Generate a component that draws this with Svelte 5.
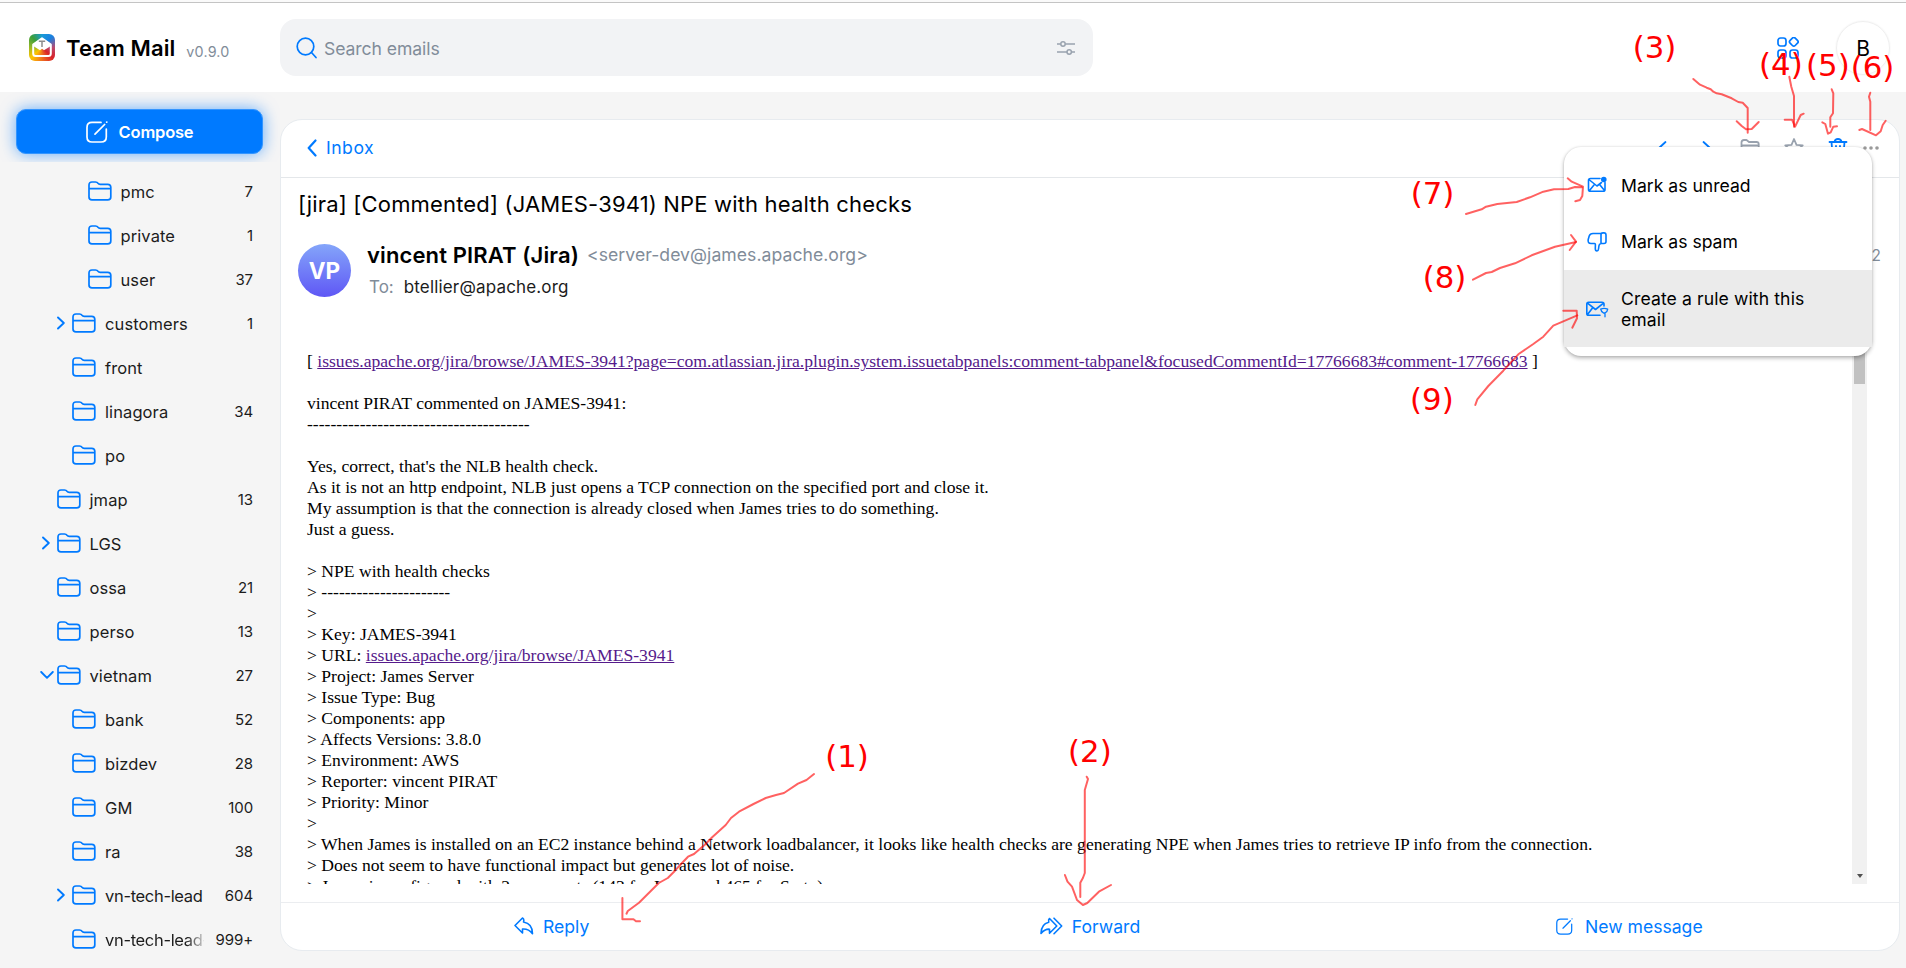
<script>
  const folders = [
    { name: 'pmc', count: '7', level: 2 },
    { name: 'private', count: '1', level: 2 },
    { name: 'user', count: '37', level: 2 },
    { name: 'customers', count: '1', level: 1, arrow: 'right' },
    { name: 'front', count: '', level: 1 },
    { name: 'linagora', count: '34', level: 1 },
    { name: 'po', count: '', level: 1 },
    { name: 'jmap', count: '13', level: 0 },
    { name: 'LGS', count: '', level: 0, arrow: 'right' },
    { name: 'ossa', count: '21', level: 0 },
    { name: 'perso', count: '13', level: 0 },
    { name: 'vietnam', count: '27', level: 0, arrow: 'down' },
    { name: 'bank', count: '52', level: 1 },
    { name: 'bizdev', count: '28', level: 1 },
    { name: 'GM', count: '100', level: 1 },
    { name: 'ra', count: '38', level: 1 },
    { name: 'vn-tech-lead', count: '604', level: 1, arrow: 'right', long: true },
    { name: 'vn-tech-lead-', count: '999+', level: 1, long: true, fade: true }
  ];

  const labels = [
    { n: 1, x: 825.2, y: 767 },
    { n: 2, x: 1068.1, y: 762 },
    { n: 3, x: 1632.7, y: 57.6 },
    { n: 4, x: 1759.1, y: 75 },
    { n: 5, x: 1806.1, y: 76 },
    { n: 6, x: 1850.7, y: 78 },
    { n: 7, x: 1410.7, y: 204 },
    { n: 8, x: 1422.7, y: 287.7 },
    { n: 9, x: 1410.1, y: 410.3 }
  ];

  const strokes = [
    '814,774 806.5,780 798,783.7 784,793 776,795 765.7,798 753.5,804 739,811.7 731,818 725.7,825 712.7,836.7 704.5,845 694,854 688,856.7 682,863 675,870.7 667.8,878 658.8,883 639,902.7 627.8,911 626.5,913.7',
    '622.4,898 622.4,919.3 633.5,919.3 636,921.3 640,921.3',
    '1086.7,776.7 1088,779 1084.8,790 1084.8,873 1082.9,878 1080.3,882.7 1080.3,897',
    '1064.9,875 1067.5,881.7 1072,886.7 1077,900 1082.9,905 1087.3,903 1098.9,891.7 1111,885',
    '1693.3,79 1700,84.7 1706.7,87.7 1710.7,89.3 1713.3,91.7 1716.7,93.3 1721.7,94.3 1731.7,98.3 1738.3,102 1742.7,102.7 1747.7,108 1747.7,132.7',
    '1736.7,121.3 1741.7,126 1746,129.3 1751.7,129 1758.7,122',
    '1789.3,76.7 1791.3,86.7 1794,96 1794,126.7',
    '1784.7,119.7 1792,119.7 1795,126.7 1800.7,115 1803.7,113.7',
    '1831.7,89.3 1833.3,93.3 1833,113.3 1830.3,117.3 1830.3,126.7',
    '1822.3,122.3 1825.3,124 1828,133.7 1830.7,132.3 1833.3,126.7 1837,126.3',
    '1870.3,92.7 1869,96.7 1870.3,101.7 1870.3,130',
    '1859.3,130 1862,129 1876,135.3 1880.7,131.3 1882.7,125 1885.7,120.7',
    '1466,214 1481.7,209.3 1486,206.7 1497.3,204 1516.7,202 1530,197.3 1543.3,191.7 1554,189.3 1568.3,189 1575,187 1581.7,187.3',
    '1567.7,178.3 1571.7,181.7 1583,186.7 1582.3,196 1580,200 1575.3,201.3',
    '1473,279.7 1486,273 1491.7,272 1500,268 1515,263.3 1531.7,255.3 1555,246.7 1576,242',
    '1571,235 1576,241.7 1569.7,250',
    '1475.3,405 1477.3,399.3 1488.3,386 1503.3,370.7 1518.3,354.3 1533.3,344 1543.3,336.7 1553.3,325.7 1577.3,315.3',
    '1563.3,310.7 1576.7,310.7 1577,318.3 1572.3,327.7'
  ];

  const link1 = 'issues.apache.org/jira/browse/JAMES-3941?page=com.atlassian.jira.plugin.system.issuetabpanels:comment-tabpanel&focusedCommentId=17766683#comment-17766683';
  const link2 = 'issues.apache.org/jira/browse/JAMES-3941';

  const intro = `vincent PIRAT commented on JAMES-3941:
--------------------------------------

Yes, correct, that's the NLB health check.
As it is not an http endpoint, NLB just opens a TCP connection on the specified port and close it.
My assumption is that the connection is already closed when James tries to do something.
Just a guess.

> NPE with health checks
> ----------------------
>
> Key: JAMES-3941
> URL: `;
  const rest = `
> Project: James Server
> Issue Type: Bug
> Components: app
> Affects Versions: 3.8.0
> Environment: AWS
> Reporter: vincent PIRAT
> Priority: Minor
>
> When James is installed on an EC2 instance behind a Network loadbalancer, it looks like health checks are generating NPE when James tries to retrieve IP info from the connection.
> Does not seem to have functional impact but generates lot of noise.
> James is configured with 2 open ports (143 for Imap and 465 for Smtp)`;
</script>

{#snippet composeIcon(size, w)}
  <svg width={size} height={size} viewBox="0 0 22 22" fill="none" stroke="currentColor" stroke-width={w} stroke-linecap="round" stroke-linejoin="round">
    <path d="M15 1.400H6Q1 1.400 1 6.400V16Q1 21 6 21H15Q20.300 21 20.300 16V8" />
    <path d="M9 13.200L18.600 3.500M20.700 1.200L20.800 1.100" />
  </svg>
{/snippet}

<div class="page">
  <div class="topline"></div>
  <header>
    <div class="brand">
      <div class="logo">
        <svg width="26" height="26" viewBox="0 0 26 26">
          <path d="M4.200 10L13 4L21.800 10V12L15 16.200L13 14.800L11 16.200L4.200 12Z" fill="#fff" />
          <path d="M4.200 10.500V19.500Q4.200 22 6.700 22H19.300Q21.800 22 21.800 19.500V10.500L13 4.200Z" fill="none" stroke="#fff" stroke-width="2" stroke-linejoin="round" />
          <path d="M9.800 7.300H16.200M13 7.300V13" stroke="#8d8d8d" stroke-width="1.500" />
        </svg>
      </div>
      <span class="title">Team Mail</span>
      <span class="version">v0.9.0</span>
    </div>
    <div class="search">
      <svg width="22" height="22" viewBox="0 0 22 22" fill="none" stroke="#007aff" stroke-width="1.700" stroke-linecap="round"><circle cx="9.500" cy="9.500" r="8.300" /><path d="M15.500 15.500L20 20.500" /></svg>
      <span>Search emails</span>
      <svg class="tune" width="18" height="14" viewBox="0 0 18 14" fill="none" stroke="#99a2ae" stroke-width="1.500"><path d="M0 3H3.700M8.300 3H18M0 11H10M14.500 11H18" /><circle cx="6" cy="3" r="2.200" /><circle cx="12.200" cy="11" r="2.200" /></svg>
    </div>
    <div class="account">
      <svg width="22" height="22" viewBox="0 0 22 22" fill="none" stroke="#007aff" stroke-width="1.700">
        <rect x="1" y="1" width="8" height="8" rx="2.500" /><rect x="1" y="13" width="8" height="8" rx="2.500" /><rect x="13" y="13" width="8" height="8" rx="2.500" />
        <rect x="13.200" y="1.200" width="7.200" height="7.200" rx="2" transform="rotate(45 16.800 4.800)" />
      </svg>
      <div class="me">B</div>
    </div>
  </header>

  <div class="content">
    <aside>
      <div class="compose-zone">
        <button class="compose">{@render composeIcon(22, 1.7)}<span>Compose</span></button>
      </div>
      <nav>
        {#each folders as f}
          <div class="folder level{f.level}">
            <span class="caret">
              {#if f.arrow === 'right'}
                <svg width="8" height="14" viewBox="0 0 8 14"><path d="M1 1.500L6.800 7L1 12.500" /></svg>
              {:else if f.arrow === 'down'}
                <svg class="down" width="14" height="8" viewBox="0 0 14 8"><path d="M1.200 1L7 6.800L12.800 1" /></svg>
              {/if}
            </span>
            <svg class="ficon" width="24" height="20" viewBox="0 0 24 20"><path d="M1 7.700V4Q1 1 4 1H7.500Q9.200 1 10 2.300Q10.700 3.300 12.200 3.300H19.700Q22.800 3.300 22.800 6.300V7.700M1 7.700V16Q1 18.900 4 18.900H19.700Q22.800 18.900 22.800 16V7.700Z" /></svg>
            <span class="fname" class:long={f.long} class:fade={f.fade}>{f.name}</span>
            <span class="count">{f.count}</span>
          </div>
        {/each}
      </nav>
    </aside>

    <main>
      <div class="toolbar">
        <svg width="10" height="18" viewBox="0 0 10 18" fill="none" stroke="#007aff" stroke-width="2.200" stroke-linecap="round" stroke-linejoin="round"><path d="M8.500 1.500L1.700 9L8.500 16.500" /></svg>
        <span class="back">Inbox</span>
        <div class="tools">
          <svg width="20" height="20" viewBox="0 0 20 20" stroke="#007aff"><path d="M12.500 4L6 10L12.500 16" /></svg>
          <svg width="20" height="20" viewBox="0 0 20 20" stroke="#007aff"><path d="M7.500 4L14 10L7.500 16" /></svg>
          <svg width="20" height="20" viewBox="0 0 20 20" stroke="#99a2ae"><path d="M1.500 7.500V4.500Q1.500 2 4 2H6.500L9 4H16.500Q18.700 4 18.700 6V15.500Q18.700 17.500 16.500 17.500H4Q1.500 17.500 1.500 15.500V7.500H18.700" /></svg>
          <svg width="20" height="20" viewBox="0 0 20 20" stroke="#99a2ae"><path d="M10 1L12.500 6.800L18.700 7.400L14 11.500L15.500 17.700L10 14.400L4.500 17.700L6 11.500L1.300 7.400L7.500 6.800Z" /></svg>
          <svg class="trash" width="20" height="20" viewBox="0 0 20 20" stroke="#007aff"><path d="M1.500 4H18.500M6.500 4Q7 1 10 1Q13 1 13.500 4M3.500 4L4.500 16.500Q4.600 18.500 6.500 18.500H13.500Q15.400 18.500 15.500 16.500L16.500 4M8 8V14M12 8V14" /></svg>
          <svg class="dots" width="16" height="4" viewBox="0 0 16 4" fill="#9a9a9a"><circle cx="2" cy="2" r="1.800" /><circle cx="8" cy="2" r="1.800" /><circle cx="14" cy="2" r="1.800" /></svg>
        </div>
      </div>

      <h1>[jira] [Commented] (JAMES-3941) NPE with health checks</h1>
      <div class="sender">
        <div class="avatar">VP</div>
        <div class="who">
          <div class="from"><b>vincent PIRAT (Jira)</b><span class="address">&lt;server-dev@james.apache.org&gt;</span></div>
          <div class="to"><span class="tolabel">To:</span><span class="recipient">btellier@apache.org</span></div>
        </div>
        <span class="date">2</span>
      </div>

      <div class="reader">
        <pre>[ <a href="#a">{link1}</a> ]

{intro}<a href="#b">{link2}</a>{rest}</pre>
        <div class="scrollbar"><div class="thumb"></div><div class="arrowdown"></div></div>
      </div>

      <footer>
        <div class="action reply">
          <svg width="20" height="18" viewBox="0 0 20 18"><path d="M8.500 1L1 8.500L8.500 16V12Q14.500 11.500 18.500 16.700Q18.500 6.500 9.500 5Q10.500 2 8.500 1Z" /></svg>
          <span>Reply</span>
        </div>
        <div class="action">
          <svg width="23" height="18" viewBox="0 0 23 18"><path d="M9.500 1.500L16.800 9L9.500 16.300V12.200Q5 11.800 1 16.500Q1.200 7 8.700 5.300Q8.200 2.500 9.500 1.500Z" /><path d="M14 1.200L21.700 9L14 16.700" /></svg>
          <span>Forward</span>
        </div>
        <div class="action fresh">
          {@render composeIcon(17, 2)}
          <span>New message</span>
        </div>
      </footer>
    </main>
  </div>

  <div class="menu">
    <div class="item">
      <svg width="22" height="20" viewBox="0 0 22 20"><path d="M14 3.500H4.500Q2.500 3.500 2.500 5.500V14.500Q2.500 16.300 4.500 16.300H17Q19 16.300 19 14.500V7.500M3.500 5L11 11L15.500 7.500M3.500 15.500L8 10M18.500 15.500L14 10" /><circle cx="17.800" cy="4.500" r="2" fill="#007aff" /></svg>
      <span>Mark as unread</span>
    </div>
    <div class="item">
      <svg width="22" height="20" viewBox="0 0 22 20"><path d="M15 1.500H7Q4 1.500 3.200 4L2.200 7.500Q1.500 11.500 5 11.500H8.500Q9.500 11.500 9.400 13L9.300 16.500Q9.300 19 11 19Q12.300 19 12.500 17L13 13.500Q13.200 12 15 11.500ZM15 1.500V11.500H18Q20 11.500 20 9.500V3Q20 0.900 18 0.900H17Q15 0.900 15 2.500Z" /></svg>
      <span>Mark as spam</span>
    </div>
    <div class="item active">
      <svg width="24" height="20" viewBox="0 0 24 20"><path d="M15 16.300H3.500Q1.800 16.300 1.800 14.500V5Q1.800 3.200 3.500 3.200H17Q19 3.200 19 5V7M2.500 4.200L10.500 10.500L18.500 4.200M2.500 15.500L7.500 9" /><path stroke-width="1.300" d="M15.700 10.200Q19 8.500 22.700 10.200Q22.500 12.500 20 14V17.800M15.700 10.200Q16 12.500 18.500 14H20" /></svg>
      <span>Create a rule with this email</span>
    </div>
  </div>

  <svg class="marks" width="1906" height="968" viewBox="0 0 1906 968">
    {#each strokes as s}<polyline points={s} />{/each}
    {#each labels as l}<text x={l.x} y={l.y}>({l.n})</text>{/each}
  </svg>
</div>

<style>
  :global(body) { margin: 0; overflow: hidden; }
  .page { position: relative; width: 1906px; height: 968px; overflow: hidden; background: #f5f5f5; font-family: Inter, sans-serif; font-size: 17px; color: #000; display: flex; flex-direction: column; }
  .page, .page * { box-sizing: border-box; }
  svg { display: block; flex: none; }
  .topline { height: 3px; background: #fafafa; border-bottom: 1px solid #c4c4c4; flex: none; }
  header { height: 89px; flex: none; background: #fff; display: flex; align-items: center; }
  .brand { width: 280px; padding-left: 29px; display: flex; align-items: center; }
  .logo { width: 26px; height: 27px; border-radius: 6px; background: conic-gradient(#189bd8, #1a80e0 12%, #b94a70 25%, #d8232a 37%, #f07020 50%, #fdc500 63%, #8db52a 77%, #3a9f3c 88%, #189bd8); }
  .title { margin-left: 11px; font-size: 22px; font-weight: 600; letter-spacing: 0.1px; }
  .version { margin: 7px 0 0 11px; font-size: 14.300px; letter-spacing: 0.2px; color: #818c99; }
  .search { width: 813px; height: 57px; border-radius: 16px; background: #f2f3f5; display: flex; align-items: center; padding: 0 17px 0 16px; color: #818c99; font-size: 17.600px; letter-spacing: -0.08px; }
  .search span { margin-left: 6px; padding-top: 2px; flex: 1; }
  .tune { margin-right: 1px; }
  .account { margin-left: auto; padding-right: 16px; display: flex; align-items: center; gap: 37px; }
  .me { width: 54px; height: 54px; border: 1px solid #efefef; border-radius: 50%; display: grid; place-items: center; font-size: 21px; padding-top: 1px; box-shadow: 0 0 2px #eee; }
  .content { flex: 1; display: flex; min-height: 0; }
  aside { width: 280px; flex: none; display: flex; flex-direction: column; }
  .compose-zone { height: 70px; flex: none; padding: 17px 18px 0 15.500px; overflow: hidden; }
  .compose { width: 247px; height: 45px; border: 1px solid #3395ff; border-radius: 10px; background: #007aff; color: #fff; box-shadow: 0 0 16px rgba(0, 122, 255, 0.6); display: flex; align-items: center; justify-content: center; gap: 11px; font: 600 16.500px Inter, sans-serif; letter-spacing: -0.2px; padding: 0 0 0 1px; }
  nav { padding-top: 7px; }
  .folder { height: 44px; display: flex; align-items: center; padding-right: 27px; }
  .level0 { padding-left: 34.500px; }
  .level1 { padding-left: 50px; }
  .level2 { padding-left: 65.500px; }
  .caret { width: 22px; padding-left: 7px; flex: none; }
  .caret svg { fill: none; stroke: #007aff; stroke-width: 1.900; stroke-linecap: round; stroke-linejoin: round; }
  .caret .down { margin-left: -2px; }
  .ficon { fill: none; stroke: #007aff; stroke-width: 1.700; stroke-linejoin: round; }
  .fname { margin-left: 9px; font-size: 16.500px; letter-spacing: 0.1px; color: #1c1c1c; white-space: nowrap; padding-top: 2px; }
  .long { letter-spacing: -0.32px; }
  .fade { max-width: 99px; overflow: hidden; background: linear-gradient(90deg, #1c1c1c 82%, rgba(28, 28, 28, 0) 104%); background-clip: text; color: transparent; }
  .count { margin-left: auto; font-size: 15px; letter-spacing: -0.1px; color: #1c1c1c; }
  main { margin-top: 27px; width: 1620px; height: 832px; background: #fff; border: 1px solid #e7ebef; border-radius: 22px; display: flex; flex-direction: column; overflow: hidden; }
  .toolbar { height: 58px; flex: none; border-bottom: 1px solid #e4e7ea; display: flex; align-items: center; padding: 0 20px 2px 26px; }
  .back { margin-left: 9px; color: #007aff; font-size: 17.600px; letter-spacing: 0.5px; }
  .tools { margin-left: auto; display: flex; align-items: center; gap: 23.700px; padding-top: 1px; }
  .tools svg { fill: none; stroke-width: 1.800; stroke-linejoin: round; stroke-linecap: round; }
  .tools .dots { fill: #9a9a9a; margin-left: -8.500px; }
  .tools .trash { margin-left: 0.500px; }
  h1 { margin: 0; height: 56px; flex: none; padding: 0 0 2px 17px; font-size: 22px; font-weight: 400; line-height: 52px; letter-spacing: 0.17px; }
  .sender { height: 90px; flex: none; display: flex; padding: 10px 18px 0 17px; }
  .avatar { width: 53px; height: 53px; border-radius: 50%; background: linear-gradient(#84a5fa, #5f57f5); color: #fff; font-weight: 700; font-size: 22.500px; display: grid; place-items: center; }
  .who { margin: -1px 0 0 16px; }
  .from { line-height: 24px; display: flex; align-items: center; }
  .from b { font-size: 22px; font-weight: 600; letter-spacing: 0.12px; }
  .address { margin-left: 8px; color: #818c99; font-size: 17.600px; letter-spacing: 0.05px; }
  .to { margin-top: 9px; line-height: 22px; display: flex; padding-left: 2px; }
  .tolabel { color: #818c99; }
  .recipient { margin-left: 10px; letter-spacing: 0.16px; color: #1c1c1c; }
  .date { margin: 2px 0 0 auto; color: #818c99; font-size: 15.400px; }
  .reader { height: 560px; flex: none; display: flex; justify-content: space-between; padding-right: 32px; overflow: hidden; }
  pre { margin: 0; padding: 27px 0 0 26px; font: 17.600px/21px "Liberation Serif", serif; color: #000; }
  a { color: #551a8b; }
  .scrollbar { width: 15px; height: 560px; background: #f1f1f1; display: flex; flex-direction: column; align-items: center; justify-content: space-between; padding-bottom: 6px; }
  .thumb { width: 11px; height: 60px; background: #c1c1c1; }
  .arrowdown { border: 3.500px solid transparent; border-top: 4px solid #505050; border-bottom: 0; }
  footer { margin-top: auto; height: 48px; flex: none; border-top: 1px solid #ebedf0; display: grid; grid-template-columns: 1fr 1fr 1fr; }
  .action { display: flex; align-items: center; justify-content: center; gap: 9px; color: #007aff; font-size: 17.600px; padding-bottom: 1px; }
  .action svg { fill: none; stroke: #007aff; stroke-width: 1.600; stroke-linejoin: round; stroke-linecap: round; }
  .action.reply { padding-left: 2px; }
  .action.fresh { gap: 12px; }
  .menu { position: absolute; left: 1564px; top: 147px; width: 308px; height: 209px; padding-top: 10px; border-radius: 17px; background: #fff; box-shadow: 0 2px 4px rgba(0, 0, 0, 0.3), 0 0 2px rgba(0, 0, 0, 0.12); }
  .item { height: 56.500px; display: flex; align-items: center; padding: 0 40px 0 21px; font-size: 17.600px; line-height: 21px; }
  .item svg { width: 24px; stroke: #007aff; fill: none; stroke-width: 1.600; stroke-linejoin: round; stroke-linecap: round; }
  .item span { margin-left: 12px; }
  .active { height: 77px; background: #ebebeb; letter-spacing: 0.1px; }
  .marks { position: absolute; inset: 0; pointer-events: none; }
  .marks polyline { fill: none; stroke: #ff0000; stroke-opacity: 0.62; stroke-width: 2; stroke-linecap: round; stroke-linejoin: round; }
  .marks text { font: 30.800px "DejaVu Sans", sans-serif; fill: #ff0000; }
</style>
